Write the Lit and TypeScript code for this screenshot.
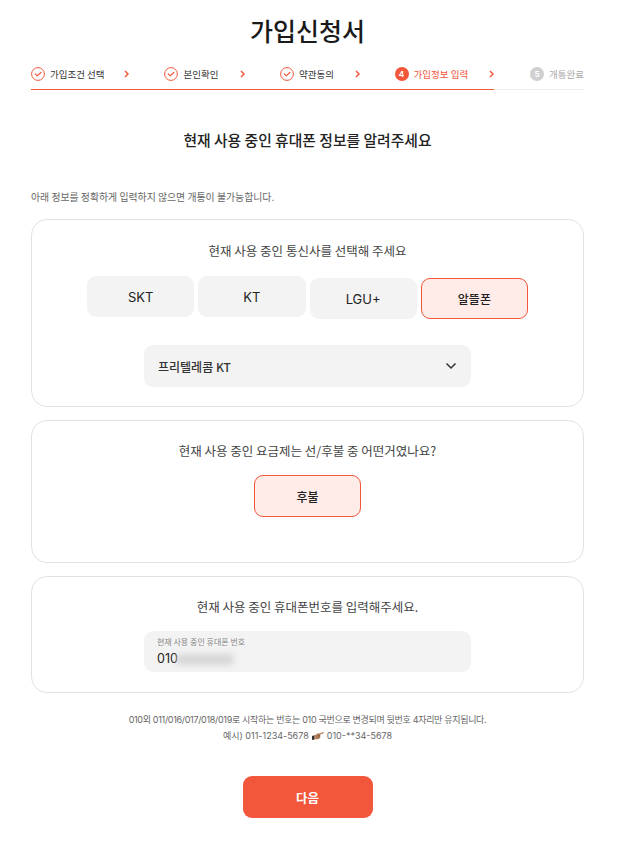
import { LitElement, html, css, svg } from "lit";
import { customElement } from "lit/decorators.js";

const steps = [
  { label: "가입조건 선택", state: "done" },
  { label: "본인확인", state: "done" },
  { label: "약관동의", state: "done" },
  { label: "가입정보 입력", state: "active", n: 4 },
  { label: "개통완료", state: "todo", n: 5 },
];

@customElement("app-root")
export class AppRoot extends LitElement {
  static styles = css`
    :host { display: block; background: #fff; min-height: 860px; font-family: Inter, "Noto Sans CJK KR", sans-serif; color: #222; }
    .page { width: 553px; margin-left: 31px; display: flex; flex-direction: column; }
    h1 { margin: 0; padding-top: 11px; height: 48px; box-sizing: content-box; font-size: 25px; line-height: 38px; font-weight: 500; text-align: center; color: #1a1a1a; font-family: "Noto Sans CJK KR", sans-serif; }
    .steps { display: flex; align-items: center; height: 30px; }
    .step { display: flex; align-items: center; font-size: 9.5px; font-weight: 400; color: #333; white-space: nowrap; font-family: "Noto Sans CJK KR", sans-serif; }
    .step.s0 { width: 134px; } .step.s1 { width: 116px; } .step.s2 { width: 115px; } .step.s3 { width: 135px; }
    .step.active { color: #f2573b; }
    .step.todo { color: #aaa; }
    .step .lab { margin-left: 5px; flex: 1; }
    .step .arrow { margin-right: 35px; flex: none; }
    .ic { width: 14px; height: 14px; flex: none; display: block; }
    .num { width: 14px; height: 14px; border-radius: 50%; flex: none; display: flex; align-items: center; justify-content: center; color: #fff; font-size: 8px; font-weight: 700; background: #f2573b; font-family: Inter, sans-serif; }
    .todo { margin-left: 1px; }
    .todo .num { background: #d0d0d0; }
    .bar { height: 1px; background: #efefef; }
    .bar div { height: 1px; background: #f2573b; width: 463px; }
    h2 { margin: 0; padding-top: 39px; height: 61px; box-sizing: content-box; font-size: 14.8px; line-height: 22px; font-weight: 500; text-align: center; color: #222; font-family: "Noto Sans CJK KR", sans-serif; }
    .notice { margin: 0; font-size: 9.9px; line-height: 14px; color: #666; height: 29px; font-family: "Noto Sans CJK KR", sans-serif; }
    .card { border: 1px solid #e2e2e2; border-radius: 16px; box-sizing: border-box; display: flex; flex-direction: column; align-items: center; background: #fff; margin-bottom: 13px; }
    .c1 { height: 188px; padding-top: 22px; }
    .c2 { height: 143px; padding-top: 21px; }
    .c3 { height: 117px; padding-top: 21px; margin-bottom: 0; }
    .q { font-size: 12.5px; line-height: 18px; color: #444; text-align: center; font-family: "Noto Sans CJK KR", sans-serif; }
    .opts { display: flex; gap: 4px; margin-top: 16px; align-items: flex-start; }
    .opt { width: 107.25px; height: 41px; border-radius: 9px; background: #f3f3f3; display: flex; align-items: center; justify-content: center; font-size: 13px; color: #222; box-sizing: border-box; }
    .opt.low { margin-top: 2px; }
    .opt.sel { background: #ffebe8; border: 1px solid #f2573b; font-family: "Noto Sans CJK KR", sans-serif; font-weight: 500; font-size: 12px; }
    .c2 .opt { margin-top: 15px; height: 42px; width: 107px; }
    .select { width: 327px; height: 42px; margin-top: 26px; border-radius: 9px; background: #f3f3f3; box-sizing: border-box; padding: 0 14px; display: flex; align-items: center; justify-content: space-between; font-size: 12px; font-weight: 500; color: #333; font-family: "Noto Sans CJK KR", sans-serif; }
    .input { width: 327px; height: 41px; margin-top: 15px; border-radius: 9px; background: #f3f3f3; box-sizing: border-box; padding: 4px 13px 0; display: flex; flex-direction: column; }
    .input small { font-size: 8px; line-height: 13px; color: #888; font-family: "Noto Sans CJK KR", sans-serif; }
    .value { font-size: 12.5px; line-height: 18px; margin-top: 2px; color: #222; display: flex; align-items: center; }
    .blur { width: 56px; height: 11px; background: #d6d6d6; filter: blur(3px); margin-left: -1px; }
    .foot { margin: 19px 0 0; text-align: center; font-size: 9px; line-height: 16px; color: #666; display: flex; flex-direction: column; align-items: center; font-family: Inter, "Noto Sans CJK KR", sans-serif; }
    .foot .line { display: flex; align-items: center; gap: 3px; }
    .foot .first { letter-spacing: -0.32px; }
    .next { align-self: center; width: 130px; height: 42px; margin-top: 32px; border-radius: 9px; background: #f2573b; color: #fff; border: 0; font-size: 12.5px; font-weight: 700; display: flex; align-items: center; justify-content: center; font-family: "Noto Sans CJK KR", sans-serif; }
  `;

  check() {
    return svg`<svg class="ic" viewBox="0 0 14 14" fill="none" stroke="#f2573b"><circle cx="7" cy="7" r="6.4" stroke-width="1"/><path d="M4.2 6.9 6.2 8.9 9.9 5.500" stroke-width="1.2" stroke-linecap="round" stroke-linejoin="round"/></svg>`;
  }
  arrow(c: string) {
    return svg`<svg class="arrow" width="5" height="8" viewBox="0 0 5 8" fill="none" stroke="${c}" stroke-width="1.5"><path d="M1 1 4 4 1 7"/></svg>`;
  }

  render() {
    return html`<div class="page">
      <h1>가입신청서</h1>
      <div class="steps">
        ${steps.map((s, i) => html`<div class="step s${i} ${s.state}">
          ${s.state === "done" ? this.check() : html`<span class="num">${s.n}</span>`}
          <span class="lab">${s.label}</span>
          ${i < 4 ? this.arrow("#f2573b") : ""}
        </div>`)}
      </div>
      <div class="bar"><div></div></div>
      <h2>현재 사용 중인 휴대폰 정보를 알려주세요</h2>
      <p class="notice">아래 정보를 정확하게 입력하지 않으면 개통이 불가능합니다.</p>
      <section class="card c1">
        <div class="q">현재 사용 중인 통신사를 선택해 주세요</div>
        <div class="opts">
          <div class="opt">SKT</div>
          <div class="opt">KT</div>
          <div class="opt low">LGU+</div>
          <div class="opt low sel">알뜰폰</div>
        </div>
        <div class="select">프리텔레콤 KT
          <svg width="12" height="8" viewBox="0 0 12 8" fill="none" stroke="#333" stroke-width="1.5"><path d="M1.5 1.5 6 6 10.500 1.500"/></svg>
        </div>
      </section>
      <section class="card c2">
        <div class="q">현재 사용 중인 요금제는 선/후불 중 어떤거였나요?</div>
        <div class="opt sel">후불</div>
      </section>
      <section class="card c3">
        <div class="q">현재 사용 중인 휴대폰번호를 입력해주세요.</div>
        <div class="input">
          <small>현재 사용 중인 휴대폰 번호</small>
          <div class="value">010<span class="blur"></span></div>
        </div>
      </section>
      <div class="foot">
        <div class="line first">010외 011/016/017/018/019로 시작하는 번호는 010 국번으로 변경되며 뒷번호 4자리만 유지됩니다.</div>
        <div class="line">예시) 011-1234-5678
          <svg width="12" height="10" viewBox="0 0 11 9"><path d="M0 4.500 2 4 5 2.200 7 2 10.500 0.800 10.800 2 7.500 3.200 7.500 6 5.800 7.500 2.500 7.500 2 8 0 8Z" fill="#b98562"/><path d="M0 4.500 2 4 2 8 0 8Z" fill="#333"/><path d="M5 4H7.500M4.500 5.500H7.500" stroke="#6b4a35" stroke-width=".6"/></svg>
          010-**34-5678</div>
      </div>
      <button class="next">다음</button>
    </div>`;
  }
}
